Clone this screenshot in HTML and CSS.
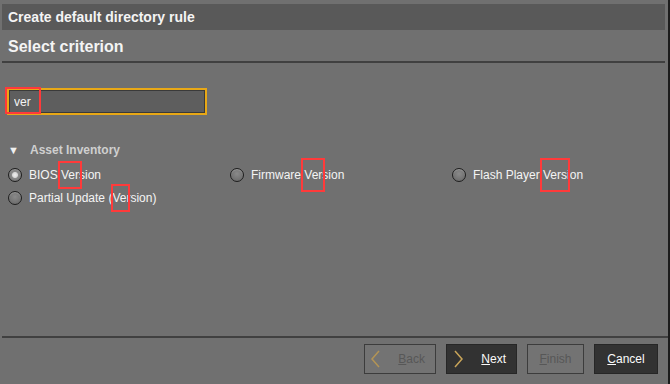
FILE: index.html
```html
<!DOCTYPE html>
<html lang="en">
    <head>
        <meta charset="UTF-8" />
        <meta name="viewport" content="width=device-width, initial-scale=1.0" />
        <link rel="stylesheet" href="styles.css">
    </head>
    <body>
        <div class="dialog">
            <div class="titlebar">Create default directory rule</div>
            <div class="heading">Select criterion</div>
            <div class="content">
                <div class="search">
                    <input type="text" value="ver">
                    <span class="mark mark-input"></span>
                </div>
                <div class="group">
                    <span class="caret">&#9660;</span>
                    <span class="group-name">Asset Inventory</span>
                </div>
                <div class="options">
                    <label class="option"><span class="radio checked"></span>BIOS <span class="hit">Ver</span>sion</label>
                    <label class="option"><span class="radio"></span>Firmware <span class="hit">Ver</span>sion</label>
                    <label class="option"><span class="radio"></span>Flash Player <span class="hit">Vers</span>ion</label>
                    <label class="option"><span class="radio"></span>Partial Update (<span class="hit tight">Ver</span>sion)</label>
                </div>
            </div>
            <div class="footer">
                <button class="btn nav" disabled>
                    <svg width="10" height="18" viewBox="0 0 10 18"><path d="M8 1 L1 9 L8 17" fill="none" stroke="currentColor" stroke-width="1.5"/></svg>
                    <span><u>B</u>ack</span>
                </button>
                <button class="btn nav dark">
                    <svg width="10" height="18" viewBox="0 0 10 18"><path d="M2 1 L9 9 L2 17" fill="none" stroke="currentColor" stroke-width="1.5"/></svg>
                    <span><u>N</u>ext</span>
                </button>
                <button class="btn" disabled><span><u>F</u>inish</span></button>
                <button class="btn dark"><span><u>C</u>ancel</span></button>
            </div>
        </div>
    </body>
</html>
```
FILE: styles.css
```css
* {
    box-sizing: border-box;
}
body {
    margin: 0;
    background-color: #707070;
    color: #f4f4f4;
    font-family: "Liberation Sans", Arial, sans-serif;
    font-size: 12px;
}
.dialog {
    display: flex;
    flex-direction: column;
    width: 670px;
    height: 384px;
    border-right: 2px solid #1c1c1c;
}
.titlebar {
    margin: 4px 3px 0 2px;
    height: 26px;
    padding-left: 6px;
    line-height: 27px;
    background-color: #595959;
    font-size: 14px;
    font-weight: bold;
}
.heading {
    margin: 0 3px 0 2px;
    height: 33px;
    padding: 0 6px;
    line-height: 34px;
    font-size: 16px;
    font-weight: bold;
    border-bottom: 2px solid #404040;
}
.content {
    flex: 1;
    padding: 25px 7px 0 7px;
}
.search {
    position: relative;
    width: 200px;
    height: 27px;
}
.search input {
    width: 100%;
    height: 100%;
    margin: 0;
    padding: 0 5px;
    font-family: inherit;
    font-size: 12px;
    color: #f4f4f4;
    background-color: #5e5e5e;
    border: 2px solid #e8a816;
    box-shadow: inset 0 0 0 1px #3a3a3a;
    outline: none;
}
.mark {
    position: absolute;
    border: 2px solid #ff3a3a;
    pointer-events: none;
}
.mark-input {
    left: -2px;
    top: -1px;
    width: 36px;
    height: 27px;
}
.group {
    display: flex;
    align-items: center;
    margin-top: 26px;
    height: 18px;
    color: #cfcfcf;
}
.caret {
    width: 23px;
    padding-left: 1px;
    font-size: 11px;
    color: #f0f0f0;
}
.group-name {
    font-weight: bold;
}
.options {
    display: grid;
    grid-template-columns: 222px 222px 1fr;
    row-gap: 7px;
    margin-top: 8px;
}
.option {
    display: flex;
    align-items: center;
    height: 16px;
    white-space: pre;
}
.radio {
    width: 14px;
    height: 14px;
    margin: 0 7px 0 1px;
    border-radius: 50%;
    border: 1px solid #1e1e1e;
    background: radial-gradient(circle at 50% 40%, #8a8a8a, #646464);
    box-shadow: inset 0 1px 1px #9a9a9a;
}
.radio.checked {
    background: radial-gradient(circle, #f0f0f0 0, #d8d8d8 2.5px, #8a8a8a 3.5px, #666 100%);
}
.hit {
    position: relative;
}
.hit::after {
    content: "";
    position: absolute;
    left: -3px;
    right: -3px;
    top: -10px;
    bottom: -10px;
    border: 2px solid #ff3a3a;
}
.option:first-child .hit::after {
    top: -7px;
    bottom: -7px;
}
.hit.tight::after {
    left: -1px;
    right: 0;
    top: -7px;
    bottom: -7px;
}
.footer {
    display: flex;
    justify-content: flex-end;
    gap: 10px;
    margin-left: 2px;
    padding: 6px 10px 10px 0;
    border-top: 2px solid #404040;
}
.btn {
    display: flex;
    align-items: center;
    justify-content: center;
    height: 30px;
    padding: 0 8px;
    font-family: inherit;
    font-size: 12px;
    color: #fafafa;
    background-color: #737373;
    border: 1px solid #3c3c3c;
}
.btn:disabled {
    color: #575757;
}
.btn.dark {
    background-color: #323232;
    border-color: #262626;
}
.btn.nav {
    justify-content: space-between;
    width: 72px;
    padding: 0 10px 0 6px;
    color: #b39455;
}
.btn.nav.dark {
    width: 71px;
    color: #c9a559;
}
.btn.nav span {
    color: #575757;
}
.btn.nav.dark span {
    color: #fafafa;
}
.btn:nth-child(3) {
    width: 57px;
}
.btn:nth-child(4) {
    width: 64px;
}
```
